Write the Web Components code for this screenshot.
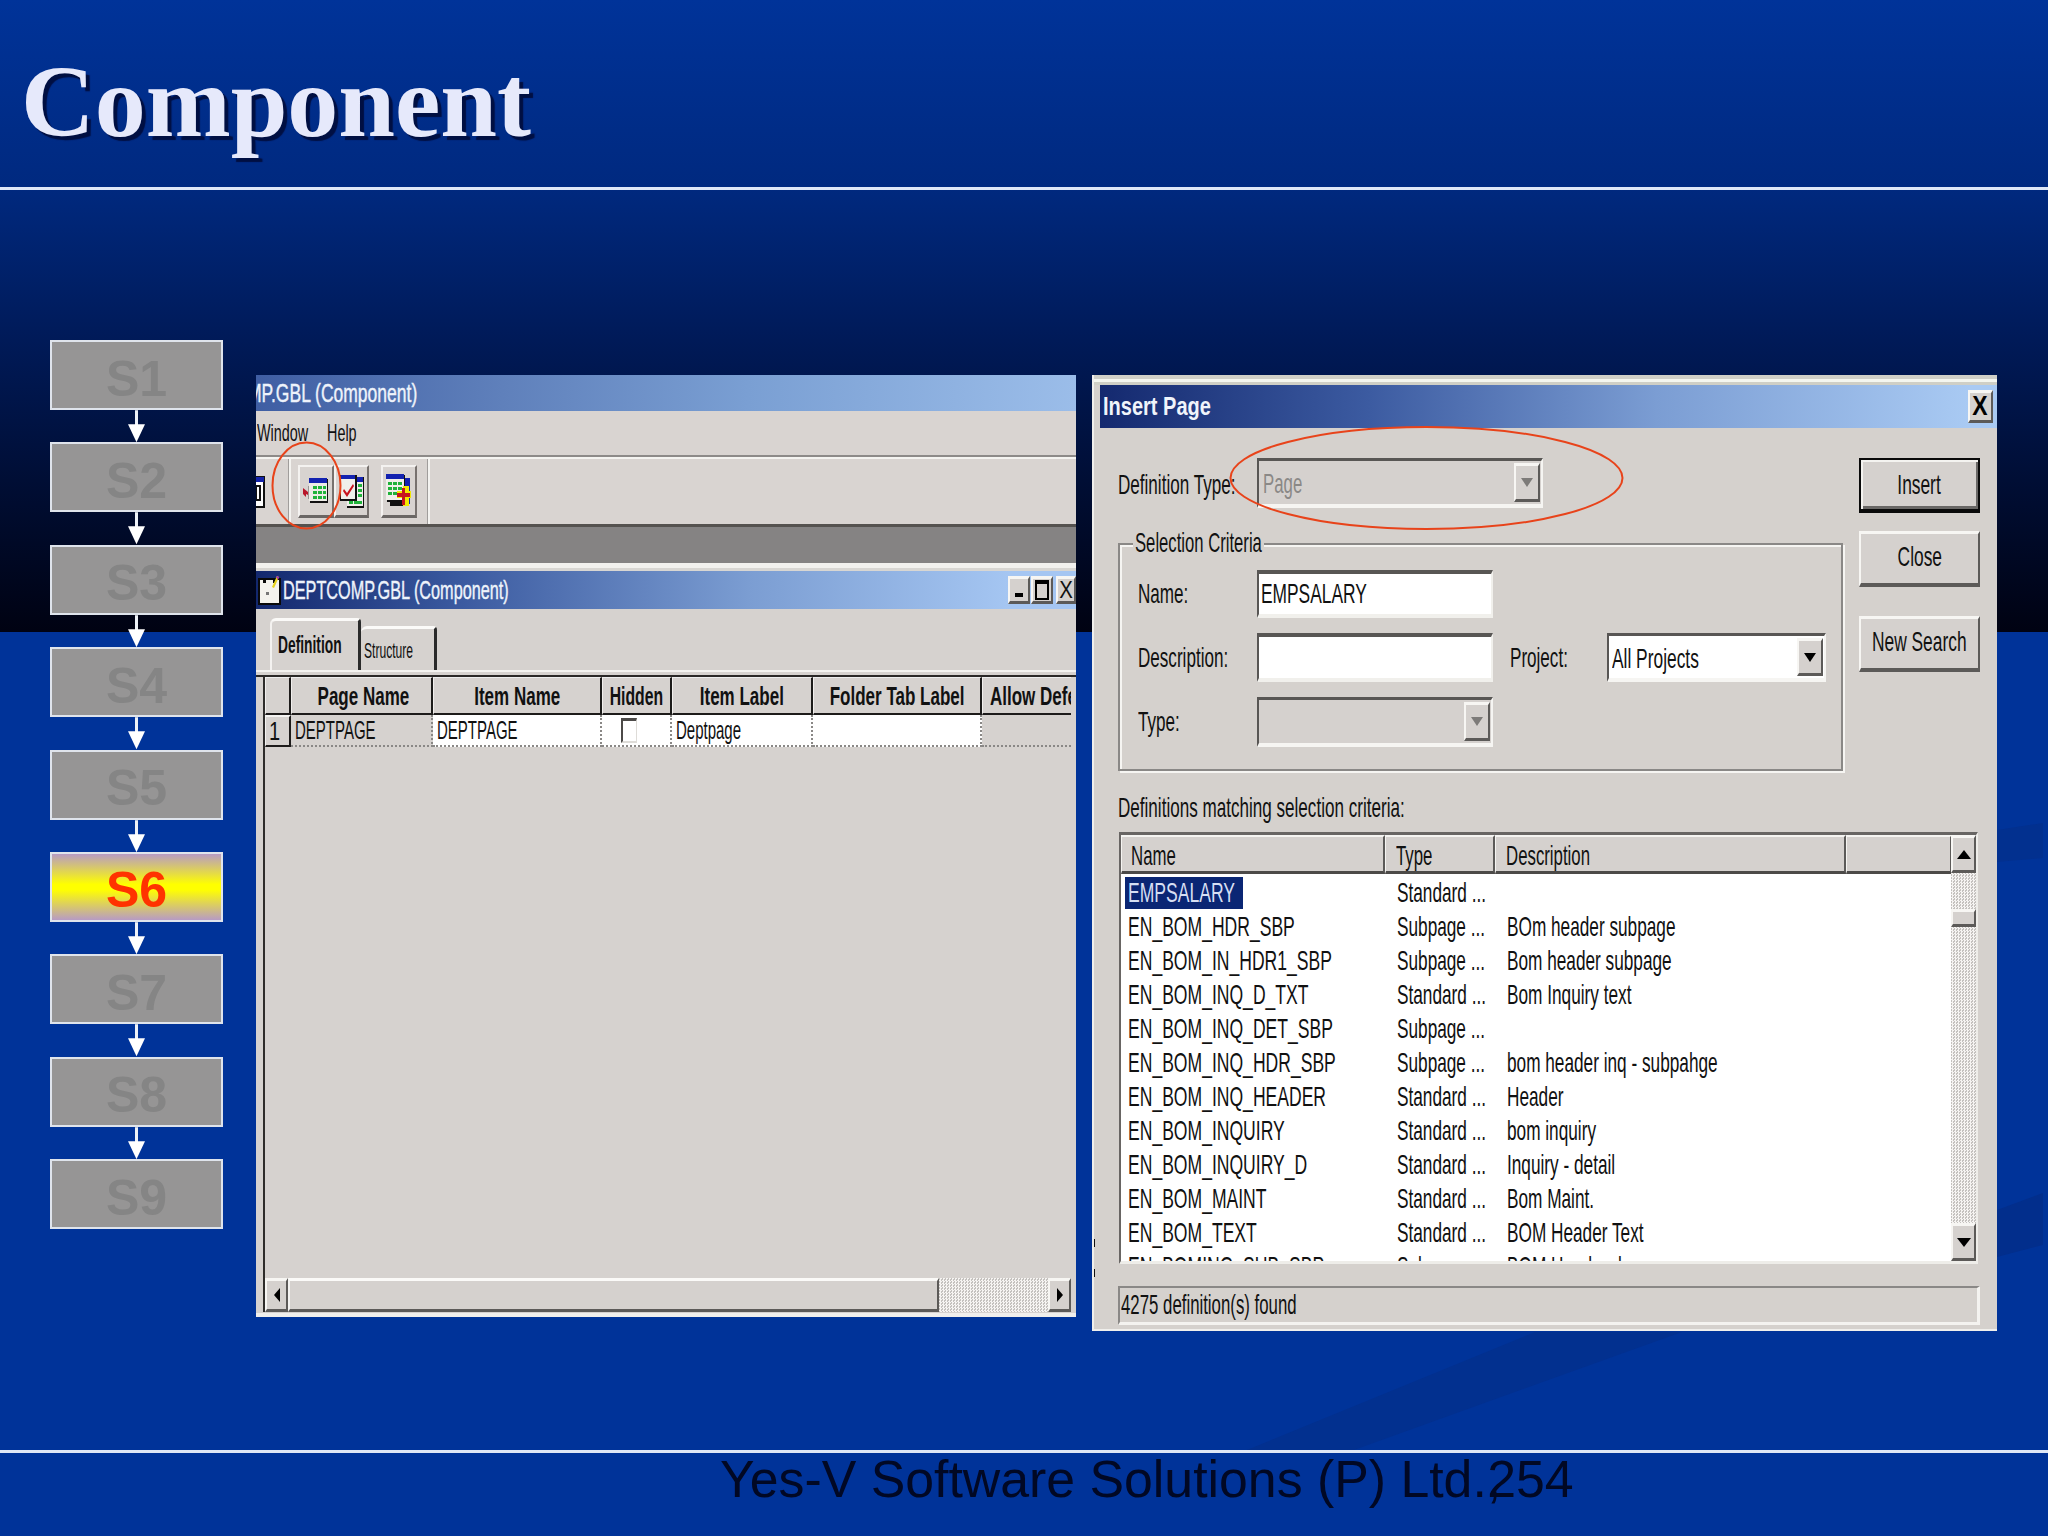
<!DOCTYPE html>
<html lang="en">
<head>
<meta charset="utf-8">
<title>Component</title>
<style>
  html,body{margin:0;padding:0;background:#003399}
</style>
</head>
<body>
<slide-deck>
  <slide-title slot="title">Component</slide-title>
  <flow-rail slot="rail">
    <flow-step>S1</flow-step>
    <flow-step>S2</flow-step>
    <flow-step>S3</flow-step>
    <flow-step>S4</flow-step>
    <flow-step>S5</flow-step>
    <flow-step active>S6</flow-step>
    <flow-step>S7</flow-step>
    <flow-step>S8</flow-step>
    <flow-step last>S9</flow-step>
  </flow-rail>
  <component-window slot="left"></component-window>
  <insert-dialog slot="right"></insert-dialog>
  <slide-footer slot="footer">Yes-V Software Solutions (P) Ltd.<span style="margin-right:-14px">,</span>254</slide-footer>
</slide-deck>

<script>
const SANS='"Liberation Sans",Arial,sans-serif';
function def(name,css,html,init){
  const t=document.createElement('template');
  t.innerHTML='<style>'+css+'</style>'+html;
  customElements.define(name,class extends HTMLElement{
    constructor(){super();this.attachShadow({mode:'open'}).appendChild(t.content.cloneNode(true));}
    connectedCallback(){if(init)init(this,this.shadowRoot);}
  });
}
const RAISED='box-sizing:border-box;border-style:solid;border-width:3px 2px;border-color:#f7f6f3 #5c5a58 #5c5a58 #f7f6f3;background:#d5d1ce;';
const DITHER='background:repeating-conic-gradient(#f6f4f2 0 25%,#c4c1be 0 50%) 0 0/3px 3px;';

def('sq-t',`:host{display:inline-block;flex:none;white-space:nowrap;font:400 28px/1.12 ${SANS};color:#111;transform:scaleX(var(--sx,.62));transform-origin:var(--o,left) center}`,'<slot></slot>');

def('slide-deck',`
  :host{display:block;position:relative;width:2048px;height:1536px;overflow:hidden;
    background:linear-gradient(#003399 0,#00297f 187px,#001a58 340px,#000e35 480px,#000212 632px,#003399 632px);}
  .decor{position:absolute;left:0;top:0;width:2048px;height:1536px}
  .page{position:relative;display:flex;flex-direction:column;height:100%}
  header{height:187px;flex:none}
  .rule{height:3px;flex:none;background:#dfe7f6}
  main{height:1260px;flex:none;display:flex;align-items:flex-start}
  .railbox{margin:150px 33px 0 50px;flex:none}
  .lbox{margin-top:185px;flex:none}
  .rbox{margin:185px 0 0 16px;flex:none}
`,`
  <svg class="decor" viewBox="0 0 2048 1536" aria-hidden="true">
    <polygon points="1535,1332 1682,1332 1354,1450 1247,1450" fill="#02308f"/>
    <polygon points="1997,830 2043,823 2043,858 1997,862" fill="#02308f"/>
    <polygon points="1997,1210 2043,1193 2043,1245 1997,1257" fill="#022e8c"/>
  </svg>
  <div class="page">
    <header><slot name="title"></slot></header>
    <div class="rule"></div>
    <main>
      <div class="railbox"><slot name="rail"></slot></div>
      <div class="lbox"><slot name="left"></slot></div>
      <div class="rbox"><slot name="right"></slot></div>
    </main>
    <div class="rule"></div>
    <slot name="footer"></slot>
  </div>`);

def('slide-title',`:host{display:block;padding:51px 0 0 21px;font:700 102px/1 "Liberation Serif","Times New Roman",serif;color:#e6e9fb;text-shadow:4px 4px 1px #000f42;white-space:nowrap}`,'<slot></slot>');

def('slide-footer',`:host{display:block;padding:0 0 0 720px;font:400 51.8px/1.1 ${SANS};color:#010824;white-space:nowrap;margin-top:-2px}`,'<slot></slot>');

def('flow-rail',`:host{display:flex;flex-direction:column;width:173px}`,'<slot></slot>');

def('flow-step',`
  :host{display:block}
  .box{box-sizing:border-box;height:70px;border:2px solid #dfe4ec;background:#969595;color:#858585;
    font:700 50px/1 ${SANS};display:flex;align-items:center;justify-content:center;padding-top:7px}
  :host([active]) .box{background:linear-gradient(#b79bc4 0,#ffff00 46%,#ffff00 54%,#b79bc4 100%);color:#ff3300}
  svg{display:block;width:173px;height:32.4px}
  :host([last]) svg{display:none}
`,`<div class="box"><slot></slot></div>
  <svg viewBox="0 0 173 32"><rect x="85" y="0" width="3" height="16" fill="#eef2f8"/><polygon points="78,14 95,14 86.5,32" fill="#fff"/></svg>`);

def('title-bar',`
  :host{display:flex;align-items:center;overflow:hidden;box-sizing:border-box;color:#eef3fb;
    background:var(--grad,linear-gradient(90deg,#14296f 0,#4a69ab 30%,#7b9dd2 60%,#a8c8f2 100%))}
`,'<slot></slot>');

def('win-btn',`
  :host{${RAISED}display:flex;align-items:center;justify-content:center;flex:none;overflow:hidden;--sx:.85;--o:center}
`,'<slot></slot>');

def('tool-btn',`
  :host{box-sizing:border-box;display:flex;align-items:center;justify-content:center;flex:none;height:53px;
    background:#d8d3d0;border-style:solid;border-width:2px 2px 3px 2px;border-color:#f4f2f0 #77716e #6a6664 #f4f2f0}
  svg{display:block}
`,'<slot></slot>');

def('h-scroll',`
  :host{display:flex;height:34px;flex:none}
  .b{${RAISED}width:23px;flex:none;display:flex;align-items:center;justify-content:center}
  .t{${RAISED}width:651px;flex:none;border-top-color:#fbfaf8;border-left-color:#f4f3f1}
  .d{${DITHER}flex:1}
  svg{display:block}
`,`<div class="b"><svg width="6" height="14" viewBox="0 0 6 14"><polygon points="6,0 0,7 6,14" fill="#000"/></svg></div>
  <div class="t"></div><div class="d"></div>
  <div class="b"><svg width="6" height="14" viewBox="0 0 6 14"><polygon points="0,0 6,7 0,14" fill="#000"/></svg></div>`);

def('component-window',`
  :host{display:flex;flex-direction:column;position:relative;width:820px;height:942px;background:#d6d2cf;overflow:hidden}
  .t1{height:36px;flex:none}
  .t1 sq-t{margin-left:-9px;--sx:.7;font-size:25px;color:#eef3fb;-webkit-text-stroke:.4px #eef3fb}
  .t1{--grad:linear-gradient(90deg,#3f5ea3 0,#5f80bb 30%,#7a9fd3 60%,#9bbde9 100%)}
  .menu{height:44px;flex:none;display:flex;align-items:center;background:#d9d4d1;--sx:.6;box-sizing:border-box}
  .menu sq-t{font-size:24px}
  .menu .w{width:70px;margin-left:1px}
  .etch{height:4px;flex:none;background:linear-gradient(#8d8a88 0 2px,#f4f3f0 2px)}
  .tools{height:65px;flex:none;display:flex;align-items:center;background:#d9d4d1;box-sizing:border-box}
  .old{width:10px;height:50px;overflow:hidden;flex:none;margin-right:22px}
  .sep{width:3px;height:65px;flex:none;background:linear-gradient(90deg,#a09d9b 0 1px,#f4f3f0 1px);}
  .dark{height:3px;flex:none;background:#55524f}
  .mdi{height:36px;flex:none;background:#858383}
  .strip{height:8px;flex:none;background:linear-gradient(#f2f1ee 0 5px,#d8d6d2 5px)}
  .t2{height:38px;flex:none;padding-left:2px}
  .t2>sq-t{--sx:.65;font-size:25px;color:#eef3fb;-webkit-text-stroke:.4px #eef3fb;width:725px;margin-left:1px}
  .t2 win-btn{height:28px}
  .t2{--grad:linear-gradient(90deg,#13286e 0,#3b5aa0 25%,#7b9dd2 60%,#a5c6f2 92%,#a5c6f2 100%)}
  .body{flex:1;display:flex;flex-direction:column;min-height:0;position:relative}
  .tabs{height:61px;flex:none;display:flex;align-items:flex-end;padding-left:14px}
  .tab{box-sizing:border-box;display:flex;align-items:center;border-top:3px solid #fbfaf8;border-left:2px solid #f4f2f0;border-right:3px solid #2a2a2a;border-radius:6px 4px 0 0;background:#d6d2cf}
  .tab.a{width:91px;height:52px;padding-left:6px;--sx:.6}
  .tab.a sq-t{font-size:23px;font-weight:700}
  .tab.b{width:76px;height:44px;padding-left:3px;--sx:.55;border-left:none;padding-top:4px}
  .tab.b sq-t{font-size:22px}
  .rim{height:7px;flex:none;margin-left:0;background:linear-gradient(#f4f3f0 0 2px,#d6d2cf 2px 5px,#2a2826 5px)}
  .gridwrap{margin:0 5px 0 7px;flex:1;display:flex;flex-direction:column;min-height:0;border-left:2px solid #2e2c2a}
  .grid{display:grid;grid-template-columns:26px 142px 169px 70px 141px 169px 89px;grid-template-rows:38px 32px;flex:none}
  .h{box-sizing:border-box;display:flex;align-items:center;justify-content:center;
     border-right:2px solid #1d1b1a;border-left:1px solid #f1efed;border-bottom:2px solid #1d1b1a;border-top:1px solid #eee;--o:center;--sx:.68}
  .h sq-t{font-size:25px;font-weight:700}
  .h.l{justify-content:flex-start;padding-left:7px;--o:left;border-right:none;overflow:hidden}
  .h.hid{--sx:.63}
  .h.pn{padding-left:4px}
  .c{box-sizing:border-box;display:flex;align-items:center;padding-left:4px;--sx:.6;border-bottom:2px dotted #8a8886;border-right:2px dotted #8a8886;background:#fff}
  .c sq-t{font-size:25px}
  .c.g{background:#d6d2cf}
  .c.n{justify-content:flex-start;padding-left:3px;background:#d6d2cf;border-left:1px solid #f4f3f1;border-top:2px solid #f4f3f1;border-right:2px solid #1d1b1a;border-bottom:2px solid #1d1b1a;--sx:.8}
  .c.cb{padding-left:19px}
  .box{box-sizing:border-box;width:16px;height:25px;background:#fff;border-style:solid;border-width:3px 1px 2px 2px;border-color:#4c4a48 #dedcd8 #dedcd8 #4c4a48}
  .fill{flex:1}
  .foot{height:5px;flex:none;background:linear-gradient(#d6d2cf 0 1px,#f0efec 1px)}
  .ring{position:absolute;left:0;top:0;width:820px;height:300px;pointer-events:none}
`,`
  <title-bar class="t1"><sq-t>MP.GBL (Component)</sq-t></title-bar>
  <div class="menu"><sq-t class="w">Window</sq-t><sq-t>Help</sq-t></div>
  <div class="etch"></div>
  <div class="tools">
    <div class="old"><svg width="10" height="50" viewBox="0 0 10 50"><rect x="-8" y="10" width="16" height="30" fill="#fff" stroke="#111" stroke-width="2"/><rect x="-8" y="10" width="16" height="5" fill="#1322a8"/><rect x="0" y="19" width="4" height="14" fill="none" stroke="#111" stroke-width="2"/></svg></div>
    <div class="sep"></div>
    <tool-btn style="width:36px;margin-left:7px">
      <svg width="28" height="36" viewBox="0 0 28 36">
        <rect x="8" y="6" width="18" height="24" fill="#111"/>
        <rect x="7" y="5" width="18" height="23" fill="#ecebe6"/>
        <rect x="7" y="5" width="18" height="5" fill="#1322b0"/>
        <g fill="#1fb23a"><rect x="11" y="13" width="4" height="3"/><rect x="16" y="13" width="4" height="3"/><rect x="21" y="13" width="3" height="3"/><rect x="11" y="18" width="4" height="3"/><rect x="16" y="18" width="4" height="3"/><rect x="21" y="18" width="3" height="3"/><rect x="11" y="23" width="4" height="3"/><rect x="16" y="23" width="4" height="3"/><rect x="21" y="23" width="3" height="3"/></g>
        <rect x="6" y="13" width="1" height="13" fill="#9a9896"/>
        <path d="M1 15l5 4v3l-2-1v3l-3-3z" fill="#b8162a"/>
      </svg>
    </tool-btn>
    <tool-btn style="width:35px">
      <svg width="26" height="36" viewBox="0 0 26 36">
        <rect x="8" y="4" width="17" height="31" fill="#111"/>
        <rect x="8" y="4" width="16" height="29" fill="#f0efea"/>
        <rect x="8" y="4" width="16" height="5" fill="#1322b0"/>
        <g fill="#1fb23a"><rect x="19" y="11" width="4" height="3"/><rect x="19" y="16" width="4" height="3"/><rect x="19" y="21" width="4" height="3"/><rect x="10" y="28" width="4" height="3"/><rect x="15" y="28" width="4" height="3"/><rect x="19" y="28" width="4" height="3"/></g>
        <rect x="1" y="2" width="17" height="26" fill="#111"/>
        <rect x="2" y="5" width="14" height="21" fill="#f0efea"/>
        <rect x="2" y="2" width="14" height="4" fill="#1322b0"/>
        <path d="M5 16l3 4 6-9 1 2-7 11-4-6z" fill="#c8141e"/>
      </svg>
    </tool-btn>
    <tool-btn style="width:36px;margin-left:12px">
      <svg width="28" height="38" viewBox="0 0 28 38">
        <rect x="10" y="6" width="15" height="26" fill="#1322b0"/>
        <rect x="5" y="28" width="16" height="6" fill="#111"/>
        <rect x="2" y="3" width="18" height="27" fill="#111"/>
        <rect x="1" y="2" width="18" height="26" fill="#f0efea"/>
        <rect x="1" y="2" width="18" height="5" fill="#1322b0"/>
        <g fill="#1fb23a"><rect x="3" y="10" width="4" height="3"/><rect x="8" y="10" width="4" height="3"/><rect x="13" y="10" width="4" height="3"/><rect x="3" y="15" width="4" height="3"/><rect x="8" y="15" width="4" height="3"/><rect x="13" y="15" width="4" height="3"/><rect x="3" y="20" width="4" height="3"/><rect x="8" y="20" width="4" height="3"/><rect x="13" y="20" width="4" height="3"/></g>
        <path d="M14 19h6v-5h6v5h2v7h-2v8h-6v-8h-6z" transform="translate(-2 0)" fill="#f2e800"/>
        <path d="M18 16h3v5h5v4h-5v8h-3v-8h-5v-4h5z" transform="translate(-1 0)" fill="#c8141e"/>
      </svg>
    </tool-btn>
    <div class="sep" style="margin-left:10px"></div>
  </div>
  <div class="dark"></div>
  <div class="mdi"></div>
  <div class="strip"></div>
  <title-bar class="t2">
    <svg width="24" height="30" viewBox="0 0 24 30" style="flex:none"><rect x="1" y="4" width="21" height="25" fill="#f4f3ee" stroke="#0a0a0a" stroke-width="2"/><path d="M5 4h3v4h-3zM15 4h3v4h-3z" fill="#0a0a0a"/><path d="M14 12l5-11 2 1-5 11z" fill="#e6d21c"/><path d="M18 1l3 1-1 3z" fill="#a020c0"/><path d="M8 17h3v3H8z" fill="#777"/></svg>
    <sq-t>DEPTCOMP.GBL (Component)</sq-t>
    <win-btn style="width:22px"><svg width="12" height="14" viewBox="0 0 12 14"><rect x="2" y="10" width="8" height="4" fill="#000"/></svg></win-btn>
    <win-btn style="width:22px;margin-left:1px"><svg width="14" height="20" viewBox="0 0 14 20"><rect x="1" y="1" width="12" height="18" fill="none" stroke="#000" stroke-width="2"/><rect x="1" y="1" width="12" height="3" fill="#000"/></svg></win-btn>
    <win-btn style="width:20px;margin-left:3px"><sq-t style="font-size:24px">X</sq-t></win-btn>
  </title-bar>
  <div class="body">
    <div class="tabs">
      <div class="tab a"><sq-t>Definition</sq-t></div>
      <div class="tab b"><sq-t>Structure</sq-t></div>
    </div>
    <div class="rim"></div>
    <div class="gridwrap">
      <div class="grid">
        <div class="h"></div>
        <div class="h pn"><sq-t>Page Name</sq-t></div>
        <div class="h"><sq-t>Item Name</sq-t></div>
        <div class="h hid"><sq-t>Hidden</sq-t></div>
        <div class="h"><sq-t>Item Label</sq-t></div>
        <div class="h"><sq-t>Folder Tab Label</sq-t></div>
        <div class="h l"><sq-t>Allow Defe</sq-t></div>
        <div class="c n"><sq-t>1</sq-t></div>
        <div class="c g"><sq-t>DEPTPAGE</sq-t></div>
        <div class="c"><sq-t>DEPTPAGE</sq-t></div>
        <div class="c cb"><div class="box"></div></div>
        <div class="c"><sq-t>Deptpage</sq-t></div>
        <div class="c"></div>
        <div class="c g" style="border-right:none"></div>
      </div>
      <div class="fill"></div>
      <h-scroll></h-scroll>
    </div>
    <div class="foot"></div>
  </div>
  <svg class="ring" viewBox="0 0 820 300" aria-hidden="true"><ellipse cx="50.5" cy="110.5" rx="34" ry="43" fill="none" stroke="#e8431a" stroke-width="2"/></svg>
`);

def('xp-button',`
  :host{${RAISED}display:flex;align-items:center;justify-content:center;width:121px;--o:center;--sx:.62;flex:none;border-width:3px 2px 4px 2px;padding-bottom:3px}
  :host([def]){border:2px solid #0a0a0a;border-bottom-width:4px;box-shadow:inset 2px 2px 0 #f4f3f0,inset -2px -3px 0 #6a6866;padding-bottom:0}
`,'<sq-t><slot></slot></sq-t>');

def('xp-combo',`
  :host{box-sizing:border-box;display:flex;align-items:center;height:100%;overflow:hidden;
    border-style:solid;border-width:3px 2px 4px 2px;border-color:#585654 #f6f5f2 #f6f5f2 #585654;background:#d5d1ce;--sx:.62}
  :host([value-on]){background:#fff}
  .txt{flex:1;padding-left:var(--pl,4px);padding-top:3px;min-width:0}
  .b{${RAISED}width:26px;height:calc(100% - 4px);display:flex;align-items:center;justify-content:center;flex:none;margin-right:1px}
  svg{display:block}
`,`<div class="txt"><slot></slot></div><div class="b"><svg width="12" height="9" viewBox="0 0 12 9"><polygon points="0,0 12,0 6,9" fill="var(--arrow,#7d7b79)"/></svg></div>`);

def('xp-input',`
  :host{box-sizing:border-box;display:flex;align-items:center;height:100%;overflow:hidden;border-style:solid;border-width:4px 2px 4px 2px;border-color:#585654 #f1f0ec #f1f0ec #585654;background:#fff;padding-left:2px;--sx:.62}
`,'<slot></slot>');

def('def-list',`
  :host{box-sizing:border-box;display:grid;grid-template-columns:1fr 25px;width:859px;height:432px;flex:none;
    border-style:solid;border-width:3px 2px;border-color:#686563 #eeede9 #eeede9 #686563;background:#fff;overflow:hidden;--sx:.615}
  .left{display:flex;flex-direction:column;min-width:0;overflow:hidden}
  .head{display:grid;grid-template-columns:264px 110px 351px 106px;height:38px;flex:none;background:#d5d1ce}
  .hc{box-sizing:border-box;display:flex;align-items:center;padding-left:9px;padding-top:3px;border-top:2px solid #f5f4f1;border-left:1px solid #f5f4f1;border-right:2px solid #5c5a58;border-bottom:3px solid #4c4a48;--sx:.6}
  .hc:nth-child(2),.hc:nth-child(3){padding-left:10px}
  .rows{flex:1;padding-top:3px;overflow:hidden;min-height:0}
  .row{display:grid;grid-template-columns:264px 110px 1fr;height:34px;align-items:center}
  .row div{padding-left:12px;display:flex;align-items:center;height:100%}
  .row div:first-child{padding-left:7px;--sx:.627}
  .sel div:first-child{padding-left:0}
  .sel .pick{margin-left:4px;width:118px;padding-left:3px;background:#0a2674;box-sizing:border-box}
  .pick sq-t{color:#d6dff3}
  .sb{display:flex;flex-direction:column;${DITHER}min-height:0}
  .btn{${RAISED}height:38px;flex:none;display:flex;align-items:center;justify-content:center}
  .thumb{${RAISED}height:18px;flex:none;margin-top:36px}
  .sp{flex:1}
  svg{display:block}
`,`<div class="left">
    <div class="head">
      <div class="hc"><sq-t>Name</sq-t></div><div class="hc"><sq-t>Type</sq-t></div><div class="hc"><sq-t>Description</sq-t></div><div class="hc"></div>
    </div>
    <div class="rows"></div>
  </div>
  <div class="sb">
    <div class="btn"><svg width="14" height="9" viewBox="0 0 14 9"><polygon points="7,0 14,9 0,9" fill="#000"/></svg></div>
    <div class="thumb"></div>
    <div class="sp"></div>
    <div class="btn"><svg width="14" height="9" viewBox="0 0 14 9"><polygon points="0,0 14,0 7,9" fill="#000"/></svg></div>
  </div>`,
  (el,root)=>{
    const S='Standard ...',P='Subpage ...';
    const data=[['EMPSALARY',S,''],['EN_BOM_HDR_SBP',P,'BOm header subpage'],['EN_BOM_IN_HDR1_SBP',P,'Bom header subpage'],['EN_BOM_INQ_D_TXT',S,'Bom Inquiry text'],['EN_BOM_INQ_DET_SBP',P,''],['EN_BOM_INQ_HDR_SBP',P,'bom header inq - subpahge'],['EN_BOM_INQ_HEADER',S,'Header'],['EN_BOM_INQUIRY',S,'bom inquiry'],['EN_BOM_INQUIRY_D',S,'Inquiry - detail'],['EN_BOM_MAINT',S,'Bom Maint.'],['EN_BOM_TEXT',S,'BOM Header Text'],['EN_BOMING_SUB_SBP',P,'BOM Header d']];
    const host=root.querySelector('.rows');
    data.forEach((r,i)=>{
      const row=document.createElement('div');row.className='row'+(i===0?' sel':'');
      row.innerHTML=`<div>${i===0?`<span class="pick"><sq-t>${r[0]}</sq-t></span>`:`<sq-t>${r[0]}</sq-t>`}</div><div>${r[1]?`<sq-t>${r[1]}</sq-t>`:''}</div><div>${r[2]?`<sq-t>${r[2]}</sq-t>`:''}</div>`;
      host.appendChild(row);
    });
  });

def('insert-dialog',`
  :host{display:flex;flex-direction:column;position:relative;width:905px;height:956px;box-sizing:border-box;background:#d5d1cd;border-left:2px solid #f0efec;border-bottom:2px solid #f0efec;overflow:hidden;--sx:.61}
  .top{height:10px;flex:none;margin-left:-2px;background:linear-gradient(#d0d0c8 0 4px,#f4f6ef 4px 7px,#cfcfc6 7px)}
  .ttl{height:43px;flex:none;margin-left:6px;--grad:linear-gradient(90deg,#14296f 0,#3c5ba1 30%,#7b9dd3 62%,#a9caf3 97%)}
  .ttl sq-t{font-size:26px;font-weight:700;color:#f0f4fb;--sx:.77;margin-left:3px;width:865px}
  .ttl win-btn{width:25px;height:33px}
  .ttl win-btn sq-t{font-size:27px;color:#000;width:auto;margin:0;font-weight:700;--sx:.85}
  .upper{display:flex;padding-left:24px;flex:none}
  .lc{width:725px;flex:none}
  .dt{display:flex;align-items:center;height:50px;margin-top:30px}
  .dt .lab{width:139px;flex:none;--sx:.61;padding-top:3px}
  .dt .cb{width:286px;height:50px;flex:none}
  .grp{position:relative;box-sizing:border-box;height:228px;margin-top:35px;border:2px solid #8a8886;box-shadow:inset 2px 2px 0 #f6f5f2,2px 2px 0 #f6f5f2;display:grid;
    grid-template-columns:119px 236px 17px 97px 219px;grid-template-rows:48px 49px 50px;row-gap:15px;padding:25px 0 0 18px}
  .leg{position:absolute;left:13px;top:-18px;width:131px;box-sizing:border-box;background:#d5d1cd;padding:0 2px;--sx:.595;height:32px;display:flex;align-items:center}
  .lbl{display:flex;align-items:center}
  .rc{margin-left:16px;width:121px;display:flex;flex-direction:column;padding-top:30px;flex:none}
  .cap{height:48px;padding-top:13px;display:flex;align-items:center;padding-left:24px;flex:none}
  .lw{padding-left:25px;flex:none}
  .st{box-sizing:border-box;margin:22px 0 0 24px;width:862px;height:39px;flex:none;display:flex;align-items:center;padding-left:1px;border-style:solid;border-width:2px 3px 3px 2px;border-color:#8a8886 #f4f3f0 #f4f3f0 #8a8886;--sx:.6}
  .ring{position:absolute;left:0;top:0;width:905px;height:200px;pointer-events:none}
  .nick{position:absolute;left:-2px;width:3px;height:8px;background:#111}
`,`
  <div class="top"></div>
  <title-bar class="ttl"><sq-t>Insert Page</sq-t><win-btn><sq-t>X</sq-t></win-btn></title-bar>
  <div class="upper">
    <div class="lc">
      <div class="dt">
        <div class="lab"><sq-t>Definition Type:</sq-t></div>
        <div class="cb"><xp-combo><sq-t style="color:#8a8886;--sx:.6">Page</sq-t></xp-combo></div>
      </div>
      <div class="grp">
        <div class="leg"><sq-t>Selection Criteria</sq-t></div>
        <div class="lbl"><sq-t>Name:</sq-t></div>
        <xp-input><sq-t>EMPSALARY</sq-t></xp-input>
        <div></div><div></div><div></div>
        <div class="lbl"><sq-t>Description:</sq-t></div>
        <xp-input></xp-input>
        <div></div>
        <div class="lbl"><sq-t>Project:</sq-t></div>
        <xp-combo value-on style="--arrow:#000;--pl:3px"><sq-t>All Projects</sq-t></xp-combo>
        <div class="lbl"><sq-t>Type:</sq-t></div>
        <xp-combo></xp-combo>
      </div>
    </div>
    <div class="rc">
      <xp-button def style="height:55px">Insert</xp-button>
      <xp-button style="height:56px;margin-top:18px">Close</xp-button>
      <xp-button style="height:56px;margin-top:29px">New Search</xp-button>
    </div>
  </div>
  <div class="cap"><sq-t>Definitions matching selection criteria:</sq-t></div>
  <div class="lw"><def-list></def-list></div>
  <div class="st"><sq-t>4275 definition(s) found</sq-t></div>
  <div class="nick" style="top:864px"></div>
  <div class="nick" style="top:894px"></div>
  <svg class="ring" viewBox="0 0 905 200" aria-hidden="true"><ellipse cx="332.5" cy="103" rx="196" ry="51" fill="none" stroke="#e8431a" stroke-width="2"/></svg>
`);
</script>
</body>
</html>
